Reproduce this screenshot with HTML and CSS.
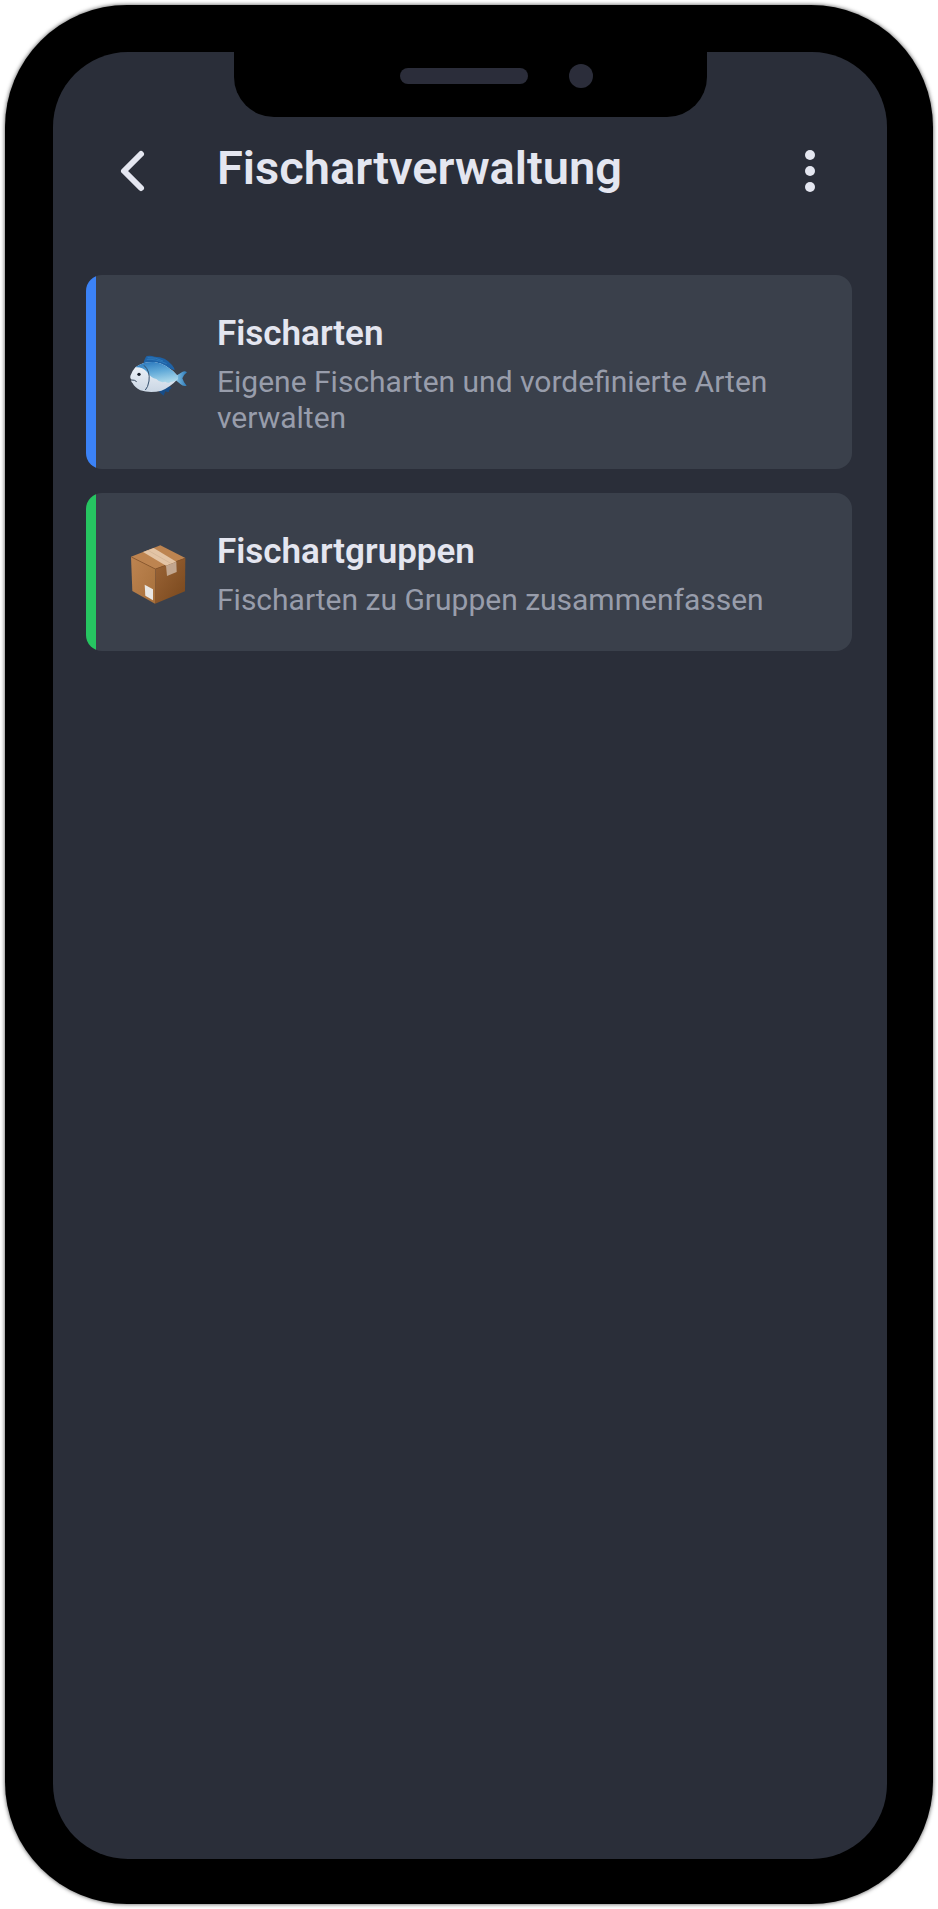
FILE: index.html
```html
<!DOCTYPE html>
<html lang="de">
<head>
    <meta charset="UTF-8">
    <meta name="viewport" content="width=device-width, initial-scale=1.0">
    <title>Fischartverwaltung</title>
    <link rel="stylesheet" href="styles.css">
</head>
<body>

    <div class="phone">
        <div class="screen">
            <div class="notch">
                <span class="speaker"></span>
                <span class="camera"></span>
            </div>

            <header class="header">
                <button class="iconBtn" type="button" aria-label="Zurück">
                    <svg viewBox="0 0 48 48">
                        <path d="M33 7 L16 24 L33 41" fill="none" stroke="currentColor" stroke-width="6" stroke-linecap="round" stroke-linejoin="round"/>
                    </svg>
                </button>
                <h1>Fischartverwaltung</h1>
                <button class="iconBtn" type="button" aria-label="Menü">
                    <svg viewBox="0 0 48 48" fill="currentColor">
                        <circle cx="24" cy="8" r="5"/>
                        <circle cx="24" cy="24" r="5"/>
                        <circle cx="24" cy="40" r="5"/>
                    </svg>
                </button>
            </header>

            <main class="cardList">
                <a class="card blue" href="#fischarten">
                    <!-- Fisch -->
                    <svg class="cardIcon" viewBox="18 0 192 192" aria-hidden="true">
                        <defs>
                            <linearGradient id="fishBack" x1="0.2" y1="0" x2="0.5" y2="1">
                                <stop offset="0" stop-color="#2b78bd"/>
                                <stop offset="0.5" stop-color="#60a9d8"/>
                                <stop offset="1" stop-color="#a8d6ea"/>
                            </linearGradient>
                            <linearGradient id="fishBelly" x1="0" y1="0" x2="0" y2="1">
                                <stop offset="0" stop-color="#f1f5fa"/>
                                <stop offset="1" stop-color="#cad6e4"/>
                            </linearGradient>
                            <linearGradient id="fishTail" x1="0" y1="0" x2="1" y2="0">
                                <stop offset="0" stop-color="#8bc6e5"/>
                                <stop offset="1" stop-color="#2877b8"/>
                            </linearGradient>
                        </defs>
                        <path d="M70 71 Q74 54 80 48 Q92 45 104 50 Q137 50 156 75 Q163 83 164 91 L120 74Z" fill="#1e62a6"/>
                        <path d="M83 53 Q106 51 129 63 M80 58 Q105 56 140 71" fill="none" stroke="#3585c6" stroke-width="2"/>
                        <path d="M115 151 Q121 162 131 167 Q134 160 136 154 Q142 157 147 155 Q146 149 155 143 L145 137Z" fill="#174d88"/>
                        <path d="M166 109 Q178 101 188 95 Q195 91 201 97 Q189 106 187 115 Q190 126 200 137 Q190 140 181 132 Q173 125 166 119Z" fill="url(#fishTail)"/>
                        <path d="M31 108 Q36 93 46 82 Q70 64 103 66 Q142 71 174 109 L174 116 Q151 141 124 152 Q91 161 61 151 Q44 142 38 130 Q31 123 35 120 Q29 116 31 108Z" fill="url(#fishBelly)"/>
                        <path d="M46 82 Q70 64 103 66 Q142 71 174 109 L174 116 Q164 127 153 125 Q145 131 136 125 Q120 130 109 117 Q93 115 79 94 Q66 80 46 82Z" fill="url(#fishBack)"/>
                        <path d="M72 76 Q91 93 87 123 Q84 142 76 150" fill="none" stroke="#334f6c" stroke-width="3"/>
                        <path d="M34 120 Q44 119 50 125" fill="none" stroke="#34455a" stroke-width="3"/>
                        <circle cx="57" cy="103" r="5" fill="#141c27"/>
                    </svg>
                    <div class="cardText">
                        <h2>Fischarten</h2>
                        <p>Eigene Fischarten und vordefinierte Arten verwalten</p>
                    </div>
                </a>

                <a class="card green" href="#fischartgruppen">
                    <!-- Paket -->
                    <svg class="cardIcon" viewBox="18 15 192 192" aria-hidden="true">
                        <defs>
                            <linearGradient id="boxLeft" x1="0" y1="0" x2="1" y2="1">
                                <stop offset="0" stop-color="#bd8451"/>
                                <stop offset="1" stop-color="#a7703b"/>
                            </linearGradient>
                            <linearGradient id="boxRight" x1="0" y1="0" x2="1" y2="1">
                                <stop offset="0" stop-color="#9c6537"/>
                                <stop offset="1" stop-color="#78471c"/>
                            </linearGradient>
                        </defs>
                        <path d="M33 65 L121 31 L196 69 L106 102Z" fill="#bd8450"/>
                        <path d="M33 65 L106 102 L105 206 L37 168Z" fill="url(#boxLeft)"/>
                        <path d="M106 102 L196 69 L195 169 L105 206Z" fill="url(#boxRight)"/>
                        <path d="M34 66 L106 102 L195 70" fill="none" stroke="#865022" stroke-width="2"/>
                        <path d="M69 51 L101 39 L169 80 L138 92Z" fill="#e3c4a5"/>
                        <path d="M84 46 L154 86" fill="none" stroke="#ceb092" stroke-width="2"/>
                        <path d="M138 92 L169 80 L170 111 L141 123Z" fill="#c2a68f"/>
                        <path d="M74 149 L99 163 L99 196 L76 182Z" fill="#e9e7e4"/>
                    </svg>
                    <div class="cardText">
                        <h2>Fischartgruppen</h2>
                        <p>Fischarten zu Gruppen zusammenfassen</p>
                    </div>
                </a>
            </main>
        </div>
    </div>

</body>
</html>
```

FILE: styles.css
```css
* {
    box-sizing: border-box;
}

body {
    margin: 0;
    padding: 5px;
    background-color: #ffffff;
    font-family: Roboto, 'Noto Sans', sans-serif;
    color: #e4e6f0;
}

h1, h2, p {
    margin: 0;
}

/* Gehäuse */
.phone {
    display: flex;
    min-height: calc(100vh - 10px);
    padding: 47px 46px 45px 48px;
    border-radius: 122px;
    background-color: #000000;
    box-shadow: 0 0 4px rgba(0, 0, 0, 0.7);
}

.screen {
    flex: 1;
    min-width: 0;
    border-radius: 75px;
    background-color: #2a2e39;
}

.notch {
    display: flex;
    justify-content: flex-end;
    align-items: center;
    gap: 41px;
    width: 473px;
    max-width: 60%;
    height: 65px;
    margin: 0 auto;
    padding: 0 114px 17px 0;
    border-radius: 0 0 40px 40px;
    background-color: #000000;
}

.speaker {
    width: 128px;
    height: 16px;
    border-radius: 8px;
    background-color: #2b2d3a;
}

.camera {
    width: 24px;
    height: 24px;
    border-radius: 50%;
    background-color: #2b2d3a;
}

.header {
    display: grid;
    grid-template-columns: 48px 1fr 48px;
    column-gap: 61px;
    align-items: center;
    padding: 22px 53px 50px 55px;
}

.header h1 {
    font-size: 47px;
    line-height: 58px;
    font-weight: 600;
    padding-bottom: 6px;
}

.iconBtn {
    width: 48px;
    height: 48px;
    padding: 0;
    border: 0;
    background: none;
    color: #e4e6f0;
    cursor: pointer;
}

.iconBtn svg {
    display: block;
    width: 48px;
    height: 48px;
}

.cardList {
    display: flex;
    flex-direction: column;
    gap: 24px;
    padding: 22px 35px 32px 33px;
}

.card {
    display: flex;
    align-items: center;
    gap: 27px;
    padding: 33px 32px 33px 40px;
    border-radius: 16px;
    background-color: #3a404b;
    color: inherit;
    text-decoration: none;
}

.card:hover {
    background-color: #434957;
}

/* farbiger Streifen links */
.blue {
    background-image: linear-gradient(to right, #3b82f6 10px, transparent 10px);
}

.green {
    background-image: linear-gradient(to right, #26c561 10px, transparent 10px);
}

.cardIcon {
    flex: none;
    width: 64px;
    height: 64px;
}

.cardText h2 {
    margin-bottom: 4px;
    font-size: 35px;
    line-height: 52px;
    font-weight: 600;
}

.cardText p {
    font-size: 30px;
    line-height: 36px;
    color: #989dab;
}
```
